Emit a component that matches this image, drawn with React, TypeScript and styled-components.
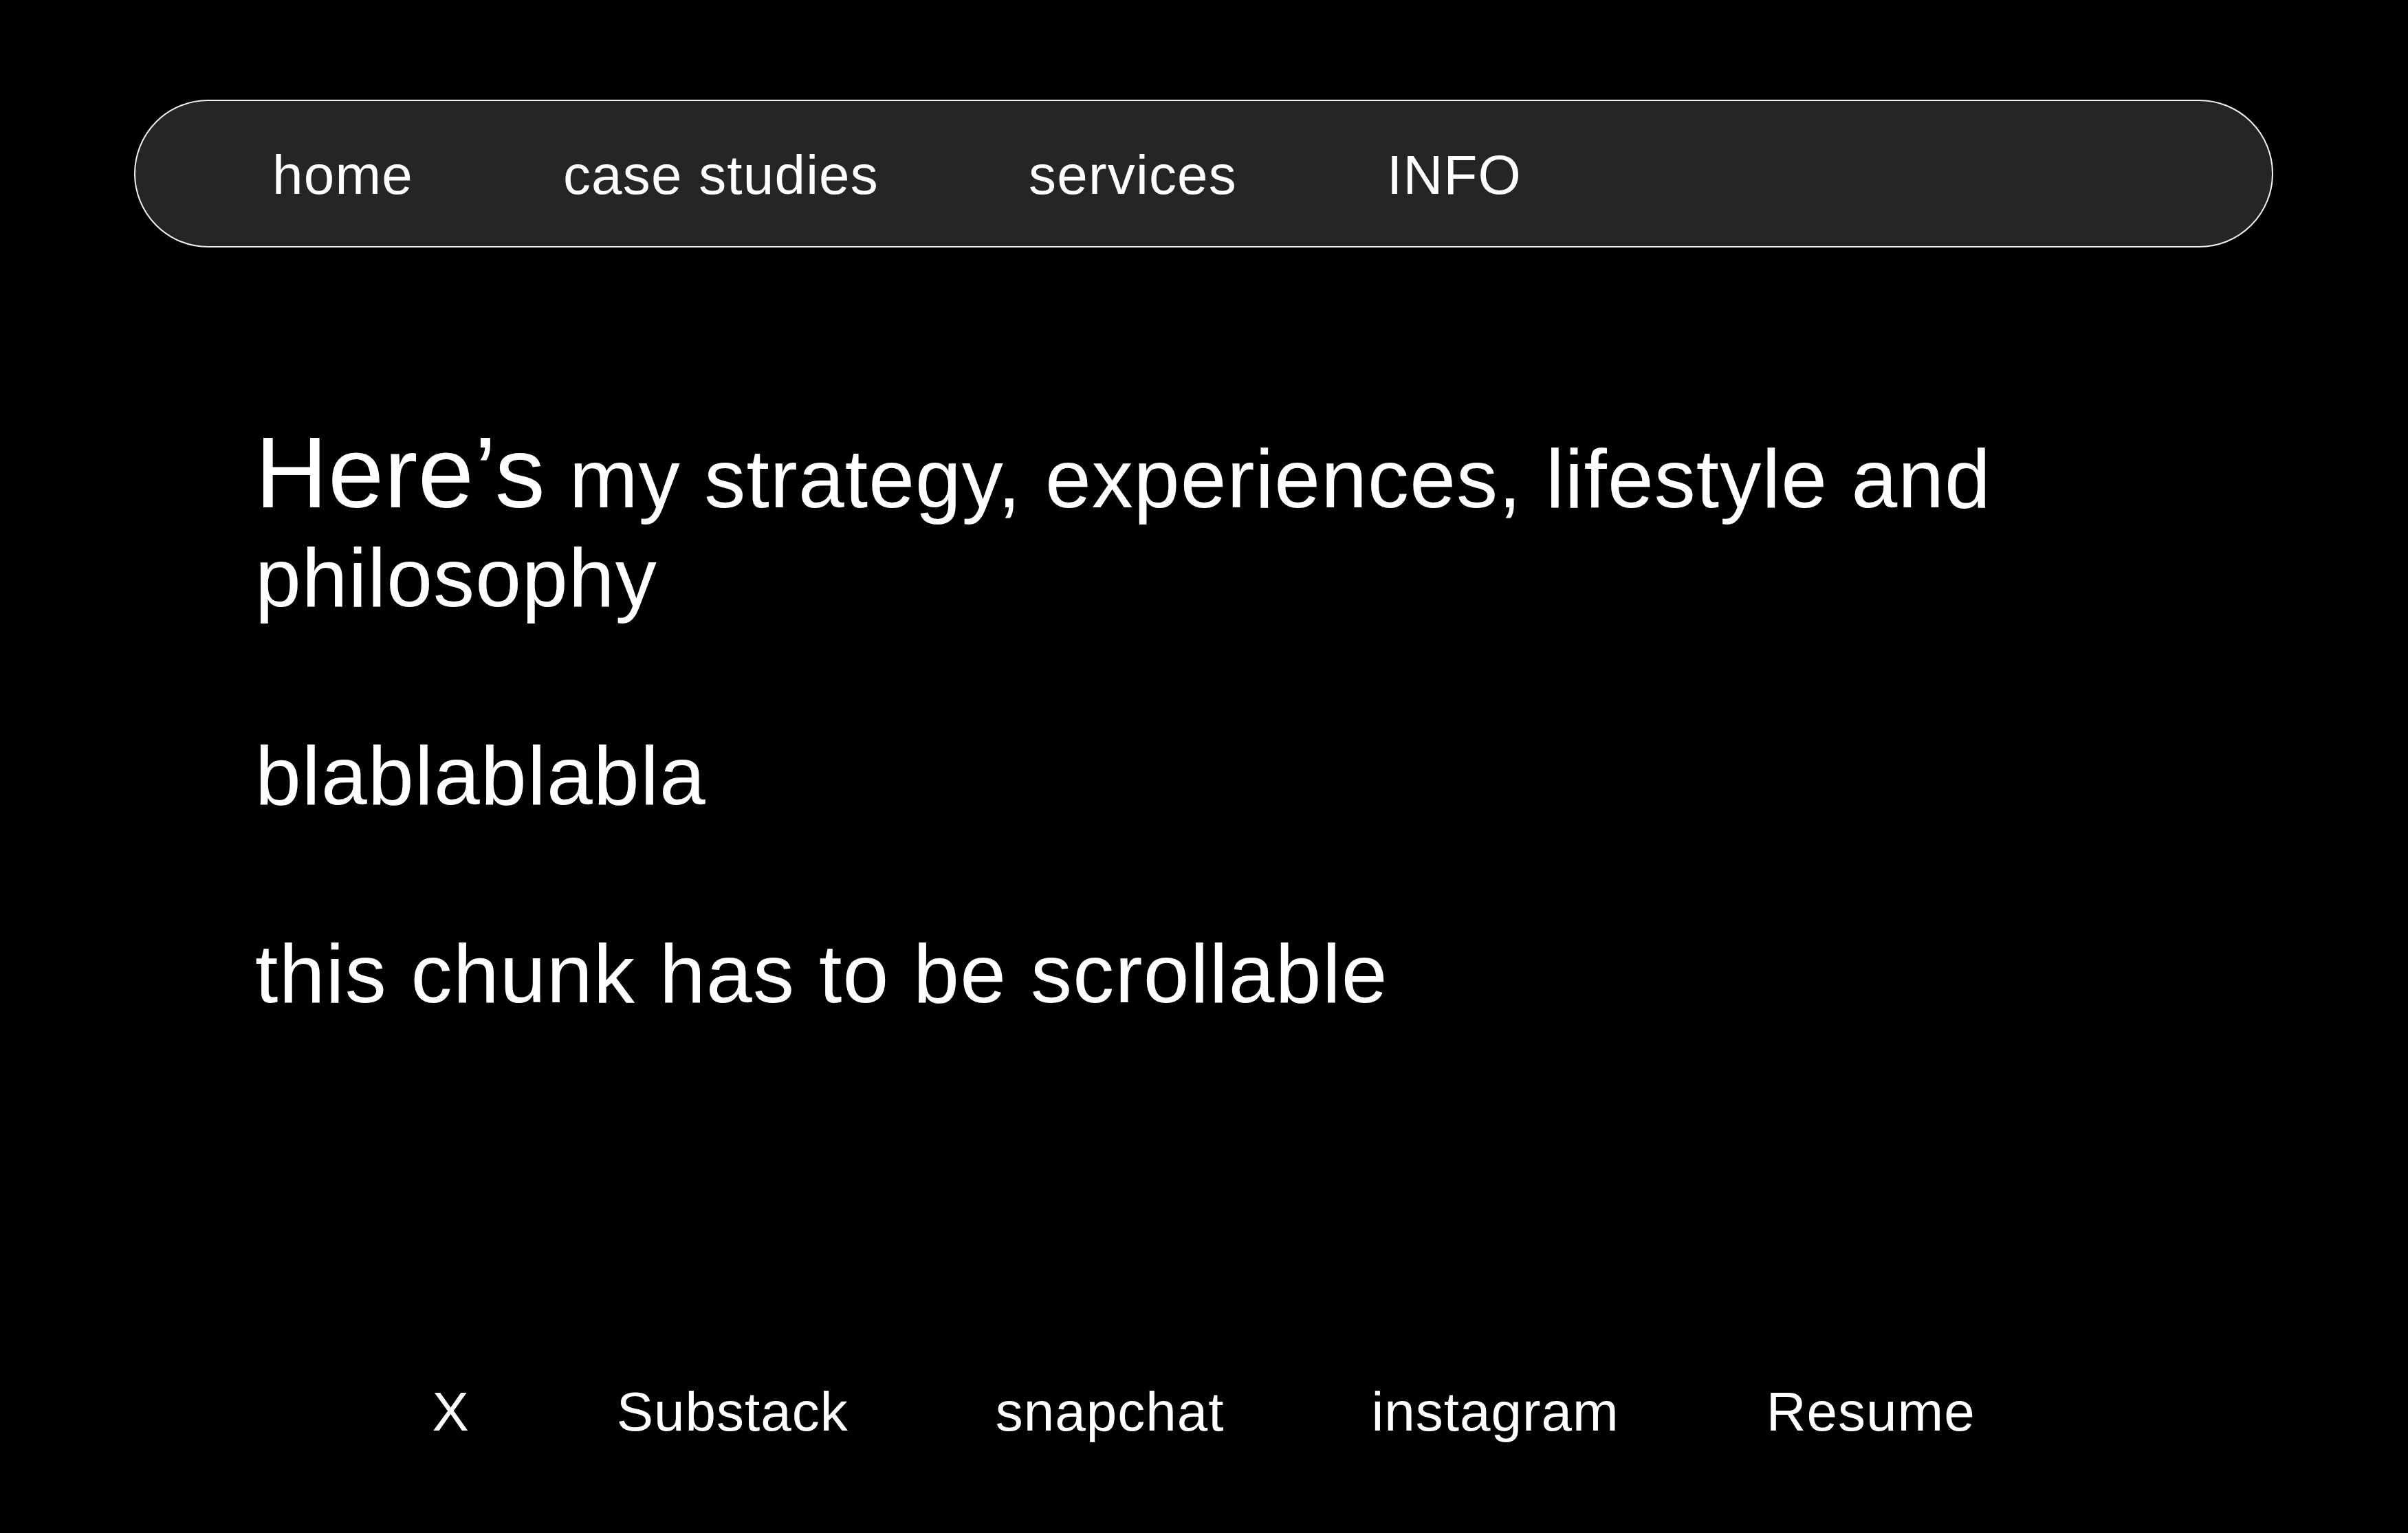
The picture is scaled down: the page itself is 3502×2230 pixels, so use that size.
import React from "react";
import styled, { createGlobalStyle } from "styled-components";

const GlobalStyle = createGlobalStyle`
  html, body {
    margin: 0;
    padding: 0;
    background: #000;
  }
  body {
    font-family: "Liberation Sans", Arial, sans-serif;
    color: #fff;
  }
`;

const Page = styled.div`
  height: 100vh;
  min-height: 2230px;
  box-sizing: border-box;
  display: flex;
  flex-direction: column;
  padding: 145px 196px 136px 195px;
  background: #000;
`;

const NavBar = styled.nav`
  height: 215px;
  box-sizing: border-box;
  display: flex;
  align-items: center;
  gap: 218px;
  padding: 5px 0 0 199px;
  background: #252525;
  border: 2px solid #f2f2f2;
  border-radius: 108px;
`;

const NavLink = styled.a`
  font-size: 80px;
  line-height: 1;
  letter-spacing: 1.2px;
  color: #fff;
  text-decoration: none;
  white-space: nowrap;
`;

const Content = styled.main`
  margin-top: 256px;
  padding: 0 174px 0 176px;
  flex: 1;
  overflow-y: auto;
`;

const Heading = styled.h1`
  margin: 0;
  font-weight: 400;
  font-size: 120px;
  line-height: 144px;
  letter-spacing: 1.1px;
  color: #fff;
`;

const Lead = styled.span`
  font-size: 146px;
  letter-spacing: 0.5px;
`;

const Paragraph = styled.p`
  margin: 144px 0 0;
  font-size: 120px;
  line-height: 144px;
  letter-spacing: 1.3px;
  color: #fff;
`;

const Footer = styled.footer`
  display: flex;
  justify-content: center;
  gap: 214px;
`;

const FooterLink = styled.a`
  font-size: 80px;
  line-height: 1;
  letter-spacing: 1px;
  color: #fff;
  text-decoration: none;
  white-space: nowrap;
`;

const navItems = ["home", "case studies", "services", "INFO"];
const footerItems = ["X", "Substack", "snapchat", "instagram", "Resume"];

export default function App() {
  return (
    <>
      <GlobalStyle />
      <Page>
        <NavBar>
          {navItems.map((item) => (
            <NavLink key={item} href="#">
              {item}
            </NavLink>
          ))}
        </NavBar>
        <Content>
          <Heading>
            <Lead>Here’s</Lead> my strategy, experiences, lifestyle and philosophy
          </Heading>
          <Paragraph>blablablabla</Paragraph>
          <Paragraph>this chunk has to be scrollable</Paragraph>
        </Content>
        <Footer>
          {footerItems.map((item) => (
            <FooterLink key={item} href="#">
              {item}
            </FooterLink>
          ))}
        </Footer>
      </Page>
    </>
  );
}
